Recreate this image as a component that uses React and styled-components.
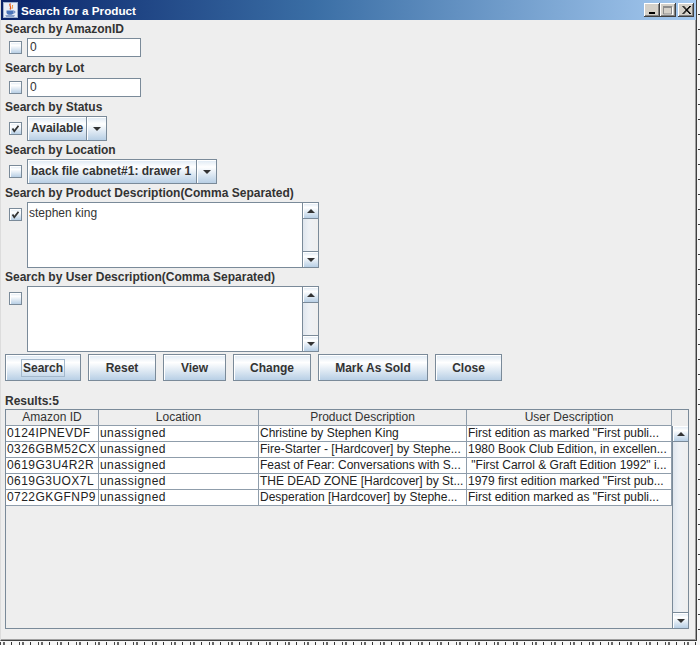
import styled, { createGlobalStyle } from 'styled-components';

const OCEAN = 'linear-gradient(to bottom, #dde8f3 0%, #ffffff 30%, #b8cfe5 100%)';
const EDGE = '#7a8a99';
const GRID = '#8f9dab';

const GlobalStyle = createGlobalStyle`
  html, body {
    margin: 0;
    padding: 0;
  }
  body {
    font-family: "Liberation Sans", Arial, sans-serif;
    overflow: hidden;
  }
`;

const rows = [
  ['0124IPNEVDF', 'unassigned', 'Christine by Stephen King', 'First edition as marked "First publi...'],
  ['0326GBM52CX', 'unassigned', 'Fire-Starter - [Hardcover] by Stephe...', '1980 Book Club Edition, in excellen...'],
  ['0619G3U4R2R', 'unassigned', 'Feast of Fear: Conversations with S...', ' "First Carrol & Graft Edition 1992" i...'],
  ['0619G3UOX7L', 'unassigned', 'THE DEAD ZONE [Hardcover] by St...', '1979 first edition marked "First pub...'],
  ['0722GKGFNP9', 'unassigned', 'Desperation [Hardcover] by Stephe...', 'First edition marked as "First publi...'],
];

const columns = ['Amazon ID', 'Location', 'Product Description', 'User Description'];
const buttons = [
  ['Search', 76],
  ['Reset', 68],
  ['View', 63],
  ['Change', 78],
  ['Mark As Sold', 110],
  ['Close', 67],
];

const JavaCup = () => (
  <svg width="15" height="16" viewBox="0 0 15 16">
    <rect x="0.5" y="0.5" width="14" height="15" fill="#e8eef8" stroke="#9fb2cf" />
    <path d="M7.5 1.5 C5 3.5 9.5 4.5 7 7.5" fill="none" stroke="#e4561b" strokeWidth="1.3" />
    <path d="M9.8 3 C8.5 4.5 10.5 5 9 6.8" fill="none" stroke="#f08a1c" strokeWidth="1" />
    <path d="M3.5 8.5 H10.5 V10.5 C10.5 12 9 12.8 7 12.8 C5 12.8 3.5 12 3.5 10.5 Z" fill="#4a74b8" />
    <path d="M10.5 9 C12.5 9 12.5 11 10.3 11.2" fill="none" stroke="#4a74b8" strokeWidth="1" />
    <path d="M2.2 13.6 H12 L11 14.6 H3.2 Z" fill="#2c56a0" />
  </svg>
);

const MinGlyph = () => (
  <svg width="8" height="8" viewBox="0 0 8 8">
    <rect x="1" y="6" width="6" height="2" fill="#000" />
  </svg>
);

const MaxGlyph = () => (
  <svg width="10" height="9" viewBox="0 0 10 9">
    <path d="M1.5 1.5 H9.5 V9 M1.5 9 H10" fill="none" stroke="#fff" />
    <path d="M0.5 0.5 H8.5 V8 H0.5 Z" fill="none" stroke="#8c8c8c" />
    <rect x="0" y="0" width="9" height="2" fill="#8c8c8c" />
  </svg>
);

const CloseGlyph = () => (
  <svg width="9" height="8" viewBox="0 0 9 8">
    <path d="M0.5 0 L8 8 M1.5 0 L9 8 M8 0 L0.5 8 M9 0 L1.5 8" stroke="#000" strokeWidth="1" />
  </svg>
);

const CheckMark = () => (
  <svg width="9" height="9" viewBox="0 0 9 9">
    <path d="M1.5 4.5 L3.3 7.3 L7.5 1.8" fill="none" stroke="#333" strokeWidth="1.8" />
  </svg>
);

export default function App() {
  return (
    <Page>
      <GlobalStyle />
      <Window>
        <TitleBar>
          <JavaCup />
          <TitleText>Search for a Product</TitleText>
          <CaptionButton>
            <MinGlyph />
          </CaptionButton>
          <CaptionButton>
            <MaxGlyph />
          </CaptionButton>
          <CaptionButton $gap>
            <CloseGlyph />
          </CaptionButton>
        </TitleBar>

        <Content>
          <Label $mt={0}>Search by AmazonID</Label>
          <Row $mt={1}>
            <CheckBox />
            <TextField>0</TextField>
          </Row>

          <Label $mt={4}>Search by Lot</Label>
          <Row $mt={2}>
            <CheckBox />
            <TextField>0</TextField>
          </Row>

          <Label $mt={3}>Search by Status</Label>
          <Row>
            <CheckBox>
              <CheckMark />
            </CheckBox>
            <Combo $w={80}>
              <ComboValue>Available</ComboValue>
              <ComboArrow>
                <Triangle />
              </ComboArrow>
            </Combo>
          </Row>

          <Label>Search by Location</Label>
          <Row>
            <CheckBox />
            <Combo $w={190}>
              <ComboValue>back file cabnet#1: drawer 1</ComboValue>
              <ComboArrow>
                <Triangle />
              </ComboArrow>
            </Combo>
          </Row>

          <Label>Search by Product Description(Comma Separated)</Label>
          <Row $top>
            <CheckBox $top>
              <CheckMark />
            </CheckBox>
            <TextArea>
              <TextAreaText>stephen king</TextAreaText>
              <VScroll>
                <ScrollButton>
                  <Triangle $up />
                </ScrollButton>
                <ScrollTrack />
                <ScrollButton $bottom>
                  <Triangle />
                </ScrollButton>
              </VScroll>
            </TextArea>
          </Row>

          <Label>Search by User Description(Comma Separated)</Label>
          <Row $top>
            <CheckBox $top />
            <TextArea>
              <TextAreaText />
              <VScroll>
                <ScrollButton>
                  <Triangle $up />
                </ScrollButton>
                <ScrollTrack />
                <ScrollButton $bottom>
                  <Triangle />
                </ScrollButton>
              </VScroll>
            </TextArea>
          </Row>

          <ButtonBar>
            {buttons.map(([text, w], i) => (
              <Button key={text} $w={w}>
                {i === 0 ? <Focus>{text}</Focus> : text}
              </Button>
            ))}
          </ButtonBar>

          <Label $mt={13}>Results:5</Label>

          <ScrollPane>
            <HeaderRow>
              {columns.map((c) => (
                <HeaderCell key={c}>{c}</HeaderCell>
              ))}
            </HeaderRow>
            <Corner />
            <TableBody>
              {rows.map((r) => (
                <TableRow key={r[0]}>
                  {r.map((v, i) => (
                    <Cell key={i} $spaced={i < 2}>
                      {v}
                    </Cell>
                  ))}
                </TableRow>
              ))}
            </TableBody>
            <VScroll $table>
              <ScrollButton>
                <Triangle $up />
              </ScrollButton>
              <ScrollTrack />
              <ScrollButton $bottom>
                <Triangle />
              </ScrollButton>
            </VScroll>
          </ScrollPane>
        </Content>
      </Window>
    </Page>
  );
}

const Page = styled.div`
  width: 700px;
  height: 645px;
  background:
    repeating-linear-gradient(to bottom, transparent 0 14px, #3c3c3c 14px 15px) 698px 0 / 2px 641px no-repeat,
    repeating-linear-gradient(to right, #444 0 1px, transparent 1px 3px, #666 3px 5px, transparent 5px 11px, #333 11px 12px, transparent 12px 19px) 0 642px / 700px 3px no-repeat,
    #f6f6f6;
`;

const Window = styled.div`
  width: 697px;
  height: 641px;
  box-sizing: border-box;
  background: #eeeeee;
  border-left: 1px solid #dcdcdc;
  border-right: 1px solid #404040;
  border-bottom: 1px solid #404040;
  box-shadow: inset -1px -1px 0 #a0a0a0;
`;

const TitleBar = styled.div`
  height: 20px;
  display: flex;
  align-items: center;
  padding: 0 2px 0 2px;
  background: linear-gradient(to right, #0a246a 0%, #3a6ea5 45%, #a6caf0 100%);
`;

const TitleText = styled.div`
  flex: 1;
  margin-left: 3px;
  color: #fff;
  font-weight: bold;
  font-size: 11.7px;
  white-space: nowrap;
`;

const CaptionButton = styled.div`
  width: 16px;
  height: 14px;
  margin-left: ${(p) => (p.$gap ? 2 : 0)}px;
  display: flex;
  align-items: center;
  justify-content: center;
  background: #d4d0c8;
  box-shadow: inset -1px -1px 0 #404040, inset 1px 1px 0 #ffffff, inset -2px -2px 0 #808080;
`;

const Content = styled.div`
  padding: 2px 0 0 4px;
  display: flex;
  flex-direction: column;
`;

const Label = styled.div`
  height: 15px;
  line-height: 15px;
  margin-top: ${(p) => p.$mt ?? 2}px;
  font-size: 12px;
  font-weight: bold;
  color: #333;
  white-space: nowrap;
`;

const Row = styled.div`
  display: flex;
  align-items: ${(p) => (p.$top ? 'flex-start' : 'center')};
  gap: 5px;
  padding-left: 4px;
  margin-top: ${(p) => p.$mt ?? 1}px;
`;

const CheckBox = styled.span`
  flex: none;
  width: 13px;
  height: 13px;
  margin-top: ${(p) => (p.$top ? 6 : 0)}px;
  box-sizing: border-box;
  display: flex;
  align-items: center;
  justify-content: center;
  border: 1px solid ${EDGE};
  background: ${OCEAN};
  box-shadow: inset 1px 1px 0 #fff;
`;

const TextField = styled.div`
  width: 114px;
  height: 19px;
  box-sizing: border-box;
  padding-left: 2px;
  border: 1px solid ${EDGE};
  background: #fff;
  font-size: 12px;
  line-height: 17px;
  color: #333;
`;

const Combo = styled.div`
  display: flex;
  width: ${(p) => p.$w}px;
  height: 25px;
  box-sizing: border-box;
  border: 1px solid ${EDGE};
`;

const ComboValue = styled.div`
  flex: 1;
  padding-left: 3px;
  background: ${OCEAN};
  box-shadow: inset 1px 1px 0 #fff;
  font-size: 12px;
  font-weight: bold;
  line-height: 23px;
  color: #333;
  white-space: nowrap;
  overflow: hidden;
`;

const ComboArrow = styled.div`
  width: 19px;
  display: flex;
  align-items: center;
  justify-content: center;
  border-left: 1px solid ${EDGE};
  background: ${OCEAN};
  box-shadow: inset 1px 1px 0 #fff;
`;

const Triangle = styled.span`
  width: 0;
  height: 0;
  border-left: 4px solid transparent;
  border-right: 4px solid transparent;
  ${(p) => (p.$up ? 'border-bottom: 4px solid #333;' : 'border-top: 4px solid #333;')}
`;

const TextArea = styled.div`
  display: flex;
  width: 292px;
  height: 66px;
  box-sizing: border-box;
  border: 1px solid ${EDGE};
  background: #fff;
`;

const TextAreaText = styled.div`
  flex: 1;
  padding: 3px 2px 0 1px;
  font-size: 12px;
  line-height: 15px;
  color: #333;
`;

const VScroll = styled.div`
  width: 15px;
  display: flex;
  flex-direction: column;
  border-left: 1px solid ${EDGE};
  background: #eeeeee;
  ${(p) => p.$table && 'grid-column: 2; grid-row: 2;'}
`;

const ScrollButton = styled.div`
  height: 15px;
  flex: none;
  display: flex;
  align-items: center;
  justify-content: center;
  background: ${OCEAN};
  box-shadow: inset 1px 1px 0 #fff;
  ${(p) => (p.$bottom ? `border-top: 1px solid ${EDGE};` : `border-bottom: 1px solid ${EDGE};`)}
`;

const ScrollTrack = styled.div`
  flex: 1;
  background: linear-gradient(to right, #dfe6ee, #eef1f5 40%, #eeeeee);
`;

const ButtonBar = styled.div`
  display: flex;
  gap: 7px;
  margin-top: 2px;
`;

const Button = styled.div`
  width: ${(p) => p.$w}px;
  height: 27px;
  box-sizing: border-box;
  display: flex;
  align-items: center;
  justify-content: center;
  border: 1px solid ${EDGE};
  background: ${OCEAN};
  box-shadow: inset 1px 1px 0 #fff;
  font-size: 12px;
  font-weight: bold;
  color: #333;
  white-space: nowrap;
`;

const Focus = styled.span`
  border: 1px solid #a3b8cc;
  line-height: 16px;
  padding: 0 1px;
`;

const ScrollPane = styled.div`
  width: 684px;
  height: 220px;
  box-sizing: border-box;
  border: 1px solid ${EDGE};
  background: #eeeeee;
  display: grid;
  grid-template-columns: 666px 16px;
  grid-template-rows: 16px 1fr;
`;

const HeaderRow = styled.div`
  display: grid;
  grid-template-columns: 93px 160px 208px 205px;
`;

const HeaderCell = styled.div`
  box-sizing: border-box;
  border-right: 1px solid ${GRID};
  border-bottom: 1px solid ${GRID};
  background: #eeeeee;
  text-align: center;
  font-size: 12px;
  line-height: 15px;
  color: #333;
  white-space: nowrap;
  overflow: hidden;
`;

const Corner = styled.div`
  background: #eeeeee;
`;

const TableBody = styled.div`
  display: flex;
  flex-direction: column;
`;

const TableRow = styled.div`
  display: grid;
  grid-template-columns: 93px 160px 208px 205px;
`;

const Cell = styled.div`
  box-sizing: border-box;
  height: 16px;
  padding-left: 1px;
  border-right: 1px solid ${GRID};
  border-bottom: 1px solid ${GRID};
  background: #fff;
  font-size: 12px;
  letter-spacing: ${(p) => (p.$spaced ? 0.45 : 0)}px;
  line-height: 15px;
  color: #222;
  white-space: pre;
  overflow: hidden;
`;
